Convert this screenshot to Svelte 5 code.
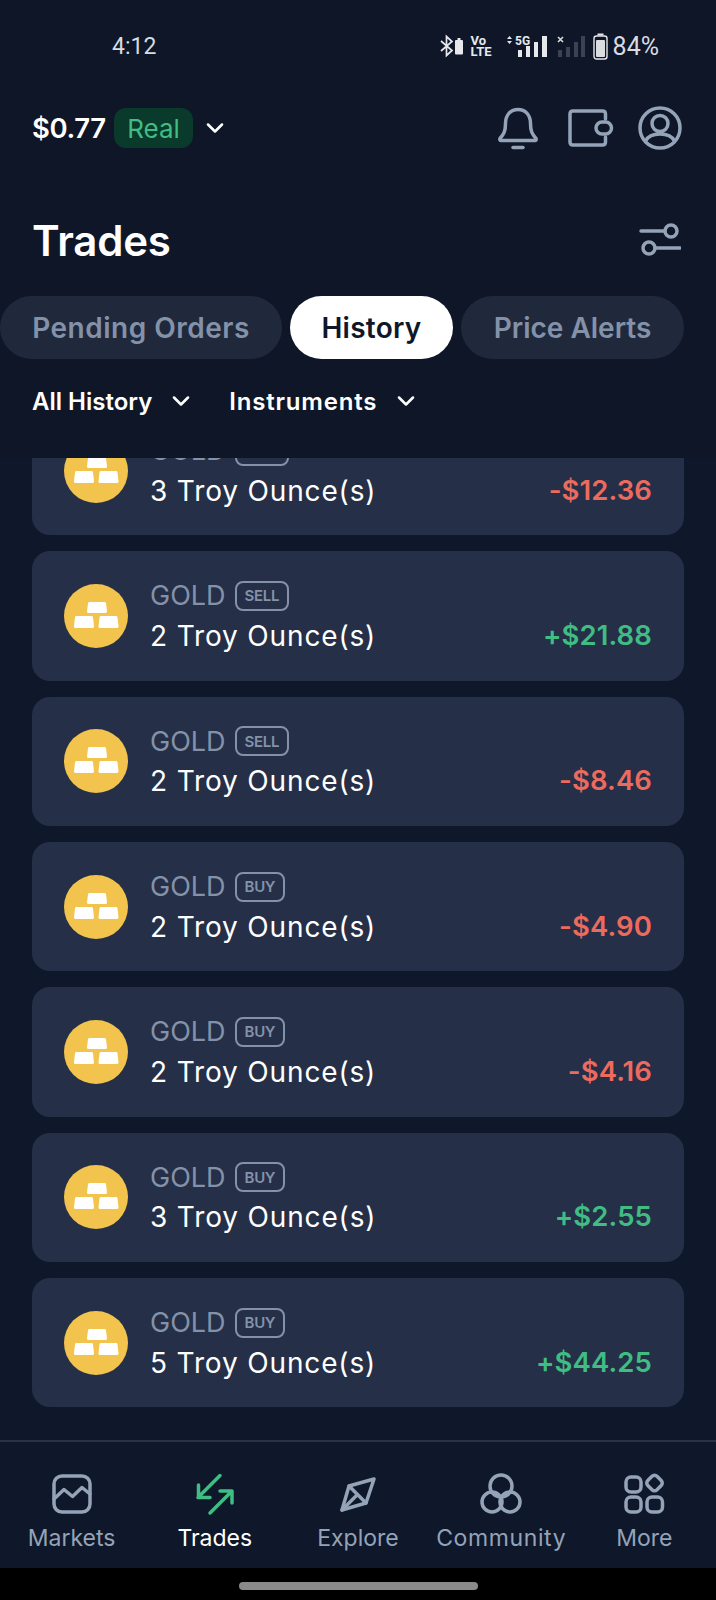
<script>
	const trades = [
		{ side: 'SELL', qty: 3, pnl: '-$12.36' },
		{ side: 'SELL', qty: 2, pnl: '+$21.88' },
		{ side: 'SELL', qty: 2, pnl: '-$8.46' },
		{ side: 'BUY', qty: 2, pnl: '-$4.90' },
		{ side: 'BUY', qty: 2, pnl: '-$4.16' },
		{ side: 'BUY', qty: 3, pnl: '+$2.55' },
		{ side: 'BUY', qty: 5, pnl: '+$44.25' }
	];
</script>

{#snippet chevron()}
	<svg class="chev" width="18" height="10" viewBox="0 0 18 10"><path d="M2 1.5 9 8.5 16 1.5" /></svg>
{/snippet}

<div class="page">
	<header class="top">
		<div class="status">
			<span class="time">4:12</span>
			<div class="sys">
				<svg width="24" height="24" viewBox="0 0 24 24" class="bt">
					<path d="M1 7 12 16.500 6.500 21.500V2.500L12 7.500 1 17" fill="none" stroke="#e6e8ec" stroke-width="1.700" />
					<rect x="15" y="6" width="8" height="14.500" rx="1" fill="#e6e8ec" />
					<rect x="17.500" y="4" width="3" height="2" fill="#e6e8ec" />
				</svg>
				<div class="volte"><span>Vo</span><span>LTE</span></div>
				<svg width="41" height="24" viewBox="0 0 41 24" class="sim1">
					<path d="M0 5 2.500 2 5 5ZM0 7 2.500 10 5 7Z" fill="#e6e8ec" />
					<text x="8" y="11" class="fiveg">5G</text>
					<rect x="11" y="16" width="4" height="7" fill="#e6e8ec" />
					<rect x="19" y="12" width="4" height="11" fill="#e6e8ec" />
					<rect x="27" y="8" width="4" height="15" fill="#e6e8ec" />
					<rect x="35" y="2" width="5" height="21" fill="#e6e8ec" />
				</svg>
				<svg width="30" height="24" viewBox="0 0 30 24" class="sim2">
					<path d="M1 3 6 8M6 3 1 8" stroke="#d8dbe0" stroke-width="1.600" />
					<rect x="1" y="16" width="4" height="7" fill="#3a4354" />
					<rect x="9" y="13" width="4" height="10" fill="#3a4354" />
					<rect x="17" y="8" width="4" height="15" fill="#3a4354" />
					<rect x="24" y="2" width="4" height="21" fill="#3a4354" />
				</svg>
				<svg width="15" height="27" viewBox="0 0 15 27" class="batt">
					<rect x="4.500" y="0.500" width="6" height="2" fill="#e6e8ec" />
					<rect x="1" y="3" width="13" height="23" rx="2.500" fill="none" stroke="#e6e8ec" stroke-width="1.400" />
					<rect x="3" y="7" width="9" height="17" rx="1" fill="#d9dce1" />
				</svg>
				<span class="pct">84%</span>
			</div>
		</div>

		<div class="account">
			<span class="balance">$0.77</span>
			<span class="real">Real</span>
			<span class="acc-chev">{@render chevron()}</span>
			<div class="actions">
				<svg width="42" height="44" viewBox="0 0 42 44" class="ico">
					<path d="M3 32.500C7 28 8.500 25 8.500 17.500 8.500 8.500 14 3.500 21 3.500S33.500 8.500 33.500 17.500C33.500 25 35 28 39 32.500 39.500 33.500 39 34.500 38 34.500H4C3 34.500 2.500 33.500 3 32.500Z" />
					<path d="M16 41.500H26" />
				</svg>
				<svg width="46" height="38" viewBox="0 0 46 38" class="ico wallet">
					<path d="M37.500 10V5C37.500 3 36.500 2 34.500 2H5C3 2 2 3 2 5V33C2 35 3 36 5 36H34.500C36.500 36 37.500 35 37.500 33V28" />
					<rect x="28" y="13" width="15.500" height="12" rx="6" />
				</svg>
				<svg width="44" height="44" viewBox="0 0 44 44" class="ico">
					<circle cx="22" cy="22" r="20" />
					<circle cx="22" cy="17.500" r="8" />
					<path d="M7.500 35C10 30 15 28 22 28S34 30 36.500 35" />
				</svg>
			</div>
		</div>

		<div class="title-row">
			<h1>Trades</h1>
			<svg width="42" height="34" viewBox="0 0 42 34" class="ico">
				<path d="M2 8H26" />
				<circle cx="32" cy="8" r="6" />
				<path d="M16 25H41" />
				<circle cx="10" cy="25" r="6" />
			</svg>
		</div>

		<div class="tabs">
			<button class="tab pending">Pending Orders</button>
			<button class="tab active">History</button>
			<button class="tab alerts">Price Alerts</button>
		</div>

		<div class="filters">
			<span class="filter">All History {@render chevron()}</span>
			<span class="filter instruments">Instruments {@render chevron()}</span>
		</div>
	</header>

	<main class="list">
		<div class="cards">
			{#each trades as t}
				<div class="card">
					<svg class="gold" width="64" height="64" viewBox="0 0 64 64">
						<circle cx="32" cy="32" r="32" fill="#f2c44e" />
						<path d="M25.500 19.500H40.500L41.500 27.500H24.500Z" fill="#fff" stroke="#fff" stroke-width="3" stroke-linejoin="round" />
						<path d="M12.500 33.500H27.500L28.500 42.500H11.500Z" fill="#fff" stroke="#fff" stroke-width="3" stroke-linejoin="round" />
						<path d="M37 33.500H52L53 42.500H36Z" fill="#fff" stroke="#fff" stroke-width="3" stroke-linejoin="round" />
					</svg>
					<div class="info">
						<div class="name"><span>GOLD</span><span class="side">{t.side}</span></div>
						<div class="qty">{t.qty} Troy Ounce(s)</div>
					</div>
					<div class="pnl" class:up={t.pnl[0] === '+'}>{t.pnl}</div>
				</div>
			{/each}
		</div>
	</main>

	<nav class="nav">
		<div class="nav-item">
			<svg width="44" height="44" viewBox="0 0 44 44" class="ico">
				<rect x="4" y="4" width="36" height="36" rx="8" />
				<path d="M4 27 14 17.500 22.500 24.500 32 15.500 40 22" />
			</svg>
			<span>Markets</span>
		</div>
		<div class="nav-item current">
			<svg width="44" height="44" viewBox="0 0 44 44" class="ico">
				<path d="M27 3.500 5 25.500M5.500 13V25.500H17" />
				<path d="M17 41 39 19M27 19H39V31" />
			</svg>
			<span>Trades</span>
		</div>
		<div class="nav-item">
			<svg width="44" height="44" viewBox="0 0 44 44" class="ico">
				<path d="M38 7 30 31 6 38 13 14Z" />
				<path d="M13 14 30 31M6 38 21.500 22.500" />
			</svg>
			<span>Explore</span>
		</div>
		<div class="nav-item">
			<svg width="44" height="44" viewBox="0 0 44 44" class="ico">
				<circle cx="22" cy="14" r="11" />
				<circle cx="13" cy="30" r="10" />
				<circle cx="31" cy="30" r="10" />
			</svg>
			<span class="wide">Community</span>
		</div>
		<div class="nav-item">
			<svg width="44" height="44" viewBox="0 0 44 44" class="ico">
				<rect x="4" y="5" width="15" height="15" rx="5" />
				<rect x="26" y="4.500" width="13" height="13" rx="3.500" transform="rotate(45 32.500 11)" />
				<rect x="4" y="25" width="15" height="15" rx="5" />
				<rect x="25" y="25" width="15.500" height="15" rx="5" />
			</svg>
			<span>More</span>
		</div>
	</nav>

	<div class="gesture"><i></i></div>
</div>

<style>
	:global(body) {
		background: #0f172a;
	}
	.page {
		width: 716px;
		height: 1600px;
		display: flex;
		flex-direction: column;
		background: #0f172a;
		font-family: Inter, "Noto Sans", sans-serif;
		color: #fff;
		overflow: hidden;
	}
	.top {
		height: 458px;
		flex: none;
		background: #0e1628;
	}
	.status {
		height: 92px;
		display: flex;
		align-items: center;
		justify-content: space-between;
		padding: 0 57px 0 112px;
		font-family: Roboto, sans-serif;
		color: #d8dbe0;
		font-size: 23px;
	}
	.sys {
		display: flex;
		align-items: center;
	}
	.bt {
		margin-right: 7px;
	}
	.volte {
		display: flex;
		flex-direction: column;
		width: 27px;
		margin-right: 9px;
		font-size: 13px;
		line-height: 11.500px;
		font-weight: 700;
		color: #e6e8ec;
	}
	.sim1 {
		margin-right: 9px;
	}
	.sim2 {
		margin-right: 6px;
	}
	.batt {
		margin-right: 5px;
	}
	.fiveg {
		font-size: 12px;
		font-weight: 700;
		fill: #e6e8ec;
		font-family: Roboto, sans-serif;
	}
	.pct {
		font-size: 25px;
	}
	.account {
		display: flex;
		align-items: center;
		height: 72px;
		padding: 0 34px 0 32px;
	}
	.balance {
		font-size: 27.500px;
		font-weight: 600;
		width: 82px;
		letter-spacing: -0.400px;
	}
	.real {
		width: 79px;
		height: 40px;
		border-radius: 12px;
		background: #0a3a2b;
		color: #3fbd83;
		font-size: 26px;
		display: flex;
		align-items: center;
		justify-content: center;
	}
	.acc-chev {
		margin-left: 13px;
		display: flex;
	}
	.chev {
		fill: none;
		stroke: #fff;
		stroke-width: 2.500;
		stroke-linecap: round;
		stroke-linejoin: round;
	}
	.actions {
		margin-left: auto;
		display: flex;
		align-items: center;
		gap: 24px;
	}
	.wallet {
		margin-left: 5px;
	}
	.ico {
		fill: none;
		stroke: #94a3b8;
		stroke-width: 3.500;
		stroke-linecap: round;
		stroke-linejoin: round;
		display: block;
	}
	.title-row {
		display: flex;
		align-items: center;
		justify-content: space-between;
		height: 60px;
		margin-top: 46px;
		padding: 0 35px 0 32px;
	}
	h1 {
		margin: 0;
		font-size: 42px;
		font-weight: 600;
		letter-spacing: -0.200px;
	}
	.tabs {
		display: flex;
		gap: 8px;
		margin-top: 26px;
	}
	.tab {
		height: 63px;
		border: none;
		border-radius: 32px;
		background: #20293b;
		color: #8492a9;
		font: 600 28px Inter, sans-serif;
		padding: 0;
	}
	.pending {
		width: 282px;
		letter-spacing: 0.500px;
	}
	.active {
		width: 163px;
		background: #fff;
		color: #0f172a;
		letter-spacing: 0.250px;
	}
	.alerts {
		width: 223px;
	}
	.filters {
		display: flex;
		gap: 39px;
		height: 52px;
		margin-top: 16px;
		padding-left: 32px;
		align-items: center;
		font-size: 24px;
		font-weight: 600;
	}
	.filter {
		display: flex;
		align-items: center;
		gap: 20px;
	}
	.instruments {
		letter-spacing: 0.800px;
	}
	.list {
		flex: 1;
		min-height: 0;
		overflow: hidden;
		padding: 0 32px;
		border-bottom: 2px solid #2a3346;
	}
	.cards {
		margin-top: -52px;
		display: flex;
		flex-direction: column;
		gap: 16px;
	}
	.card {
		height: 129.330px;
		flex: none;
		border-radius: 18px;
		background: #252f47;
		display: flex;
		align-items: center;
		padding: 0 32px;
	}
	.gold {
		flex: none;
		margin-right: 24px;
	}
	.info {
		flex: 1;
		padding-top: 2px;
		margin-left: -2px;
	}
	.name {
		display: flex;
		align-items: center;
		gap: 9px;
		height: 36px;
		font-size: 27px;
		color: #8492a9;
	}
	.side {
		border: 2px solid #8492a9;
		border-radius: 8px;
		height: 30px;
		padding: 0 8px;
		box-sizing: border-box;
		display: flex;
		align-items: center;
		font-size: 15px;
		font-weight: 600;
		letter-spacing: -0.300px;
	}
	.qty {
		font-size: 28px;
		letter-spacing: 0.850px;
		margin-top: 2px;
		line-height: 40px;
	}
	.pnl {
		font-size: 27.500px;
		font-weight: 600;
		letter-spacing: 0.100px;
		color: #ec6a5e;
		margin-top: 38px;
	}
	.pnl.up {
		color: #3fbd83;
	}
	.nav {
		height: 126px;
		flex: none;
		display: grid;
		grid-template-columns: repeat(5, 1fr);
		padding-top: 30px;
		box-sizing: border-box;
	}
	.nav-item {
		display: flex;
		flex-direction: column;
		align-items: center;
		gap: 8px;
		font-size: 23px;
		color: #94a3b8;
	}
	.wide {
		letter-spacing: 0.600px;
	}
	.current {
		color: #fff;
	}
	.current .ico {
		stroke: #3fbd83;
	}
	.gesture {
		height: 32px;
		flex: none;
		background: #000;
		display: flex;
		justify-content: center;
		align-items: center;
	}
	.gesture i {
		width: 239px;
		height: 8px;
		border-radius: 4px;
		background: #8a8a8a;
		margin-top: 4px;
	}
</style>
